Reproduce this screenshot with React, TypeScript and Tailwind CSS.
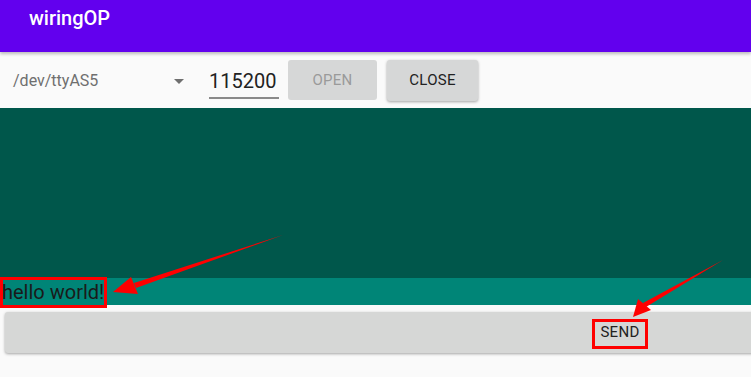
import React from "react";

export default function App() {
  return (
    <div className="relative w-[751px] h-[377px] overflow-hidden bg-[#fafafa] font-['Roboto',sans-serif]">
      <header className="h-[52px] bg-[#6200ee] flex items-center pl-[29px] shadow-[0_2px_3px_rgba(0,0,0,0.25)] relative z-10">
        <h1 className="text-white text-[20px] font-medium leading-none -mt-[16px]">wiringOP</h1>
      </header>

      <div className="h-[56px] flex items-center">
        <div className="w-[196px] pl-[13px] pr-[12px] pt-[2px] flex items-center justify-between">
          <span className="text-[16px] text-[#6f6f6f]">/dev/ttyAS5</span>
          <span className="w-0 h-0 border-l-[5px] border-r-[5px] border-t-[5px] border-l-transparent border-r-transparent border-t-[#6f6f6f]" />
        </div>
        <div className="ml-[13px] w-[70px] flex flex-col pt-[7px]">
          <span className="text-[20px] leading-[26px] text-[#222]">115200</span>
          <span className="h-[2px] bg-[#8a8a8a] mt-[3px]" />
        </div>
        <button className="ml-[9px] w-[89px] h-[40px] rounded-[3px] bg-[#d6d7d7] text-[#9a9a9a] text-[15px] font-normal tracking-[0.3px]">
          OPEN
        </button>
        <button className="ml-[10px] w-[91px] h-[41px] rounded-[3px] bg-[#d6d7d7] text-[#222] text-[15px] font-normal tracking-[0.3px] shadow-[0_1px_3px_rgba(0,0,0,0.35)]">
          CLOSE
        </button>
      </div>

      <div className="h-[170px] bg-[#00574b]" />
      <div className="h-[27px] bg-[#008577] flex items-center">
        <span className="text-[20px] leading-none text-[#1a1a1a] pl-[2px]">hello world!</span>
      </div>

      <div className="pt-[7px] pl-[5px]">
        <button className="w-[1230px] h-[41px] rounded-[3px] bg-[#d6d7d6] text-[#222] text-[15px] font-normal tracking-[0.3px] shadow-[0_1px_3px_rgba(0,0,0,0.35)]">
          SEND
        </button>
      </div>

      {/* annotation overlay */}
      <div className="absolute left-0 top-[277px] w-[107px] h-[31px] border-[3px] border-[#ff0000]" />
      <div className="absolute left-[592px] top-[319px] w-[56px] h-[30px] border-[3px] border-[#ff0000]" />
      <svg className="absolute inset-0" width="751" height="377" viewBox="0 0 751 377">
        <polygon points="283,235 134,283 136,288" fill="#ff0000" />
        <polygon points="113,292 131,277 138,294" fill="#ff0000" />
        <polygon points="723,260 643,303 646,307" fill="#ff0000" />
        <polygon points="633,317 638,299 651,310" fill="#ff0000" />
      </svg>
    </div>
  );
}
